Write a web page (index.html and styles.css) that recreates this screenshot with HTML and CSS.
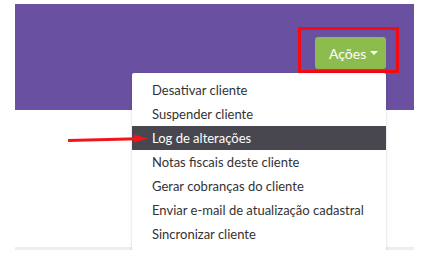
FILE: index.html
```html
<!DOCTYPE html>
<html lang="pt-BR">
<head>
    <meta charset="UTF-8">
    <meta name="viewport" content="width=device-width, initial-scale=1.0">
    <title>Cliente</title>
    <link rel="stylesheet" href="styles.css">
</head>

<body>
    <div class="page">
        <div class="header">
            <div class="highlight-box">
                <div class="actions">
                    <button class="btn-actions">Ações <span class="caret"></span></button>
                    <ul class="dropdown">
                        <li>Desativar cliente</li>
                        <li>Suspender cliente</li>
                        <li class="active">Log de alterações</li>
                        <li>Notas fiscais deste cliente</li>
                        <li>Gerar cobranças do cliente</li>
                        <li>Enviar e-mail de atualização cadastral</li>
                        <li>Sincronizar cliente</li>
                    </ul>
                </div>
            </div>
        </div>
        <div class="card"></div>

        <svg class="arrow" width="90" height="14" viewBox="0 0 90 14">
            <line x1="2" y1="8.5" x2="72" y2="6.8" stroke="#f0141b" stroke-width="3"/>
            <polygon points="68,2.5 82,6.5 68,10.5" fill="#f0141b"/>
        </svg>
    </div>
</body>
</html>
```

FILE: styles.css
```css
*, *:before, *:after {
    box-sizing: border-box;
}

body {
    margin: 0;
    background-color: #ffffff;
    font-family: Lato, "Open Sans", sans-serif;
}

.page {
    position: relative;
    padding: 4px 26px 0 15px;
}

.header {
    height: 106px;
    background-color: #6a50a0;
    display: flex;
    justify-content: flex-end;
    align-items: flex-start;
}

.highlight-box {
    margin: 23px 15px 0 0;
    padding: 7px 10px 1px 14px;
    border: 3px solid #f40a12;
}

.actions {
    position: relative;
}

.btn-actions {
    display: flex;
    align-items: center;
    gap: 4px;
    width: 71px;
    height: 32px;
    padding: 0 0 0 14px;
    border: none;
    border-radius: 3px;
    background-color: #8dbc4e;
    color: #ffffff;
    font-family: Lato, "Open Sans", sans-serif;
    font-size: 14px;
}

.caret {
    width: 0;
    height: 0;
    border-style: solid;
    border-width: 4px 4px 0 4px;
    border-color: #ffffff transparent transparent transparent;
}

.dropdown {
    position: absolute;
    top: 36px;
    right: 0;
    width: 254px;
    margin: 0;
    padding: 5px 0;
    list-style: none;
    background-color: #ffffff;
    box-shadow: 0 1px 3px rgba(0, 0, 0, 0.18);
    border-radius: 2px;
    z-index: 2;
}

.dropdown li {
    height: 24px;
    line-height: 24px;
    padding: 0 20px;
    font-size: 13px;
    color: #333333;
    white-space: nowrap;
}

.dropdown li.active {
    background-color: #48474f;
    color: #ffffff;
}

.card {
    height: 140px;
    background-color: #ffffff;
    border-bottom: 3px solid #eceef2;
}

.arrow {
    position: absolute;
    left: 66px;
    top: 132px;
    z-index: 3;
}
```
